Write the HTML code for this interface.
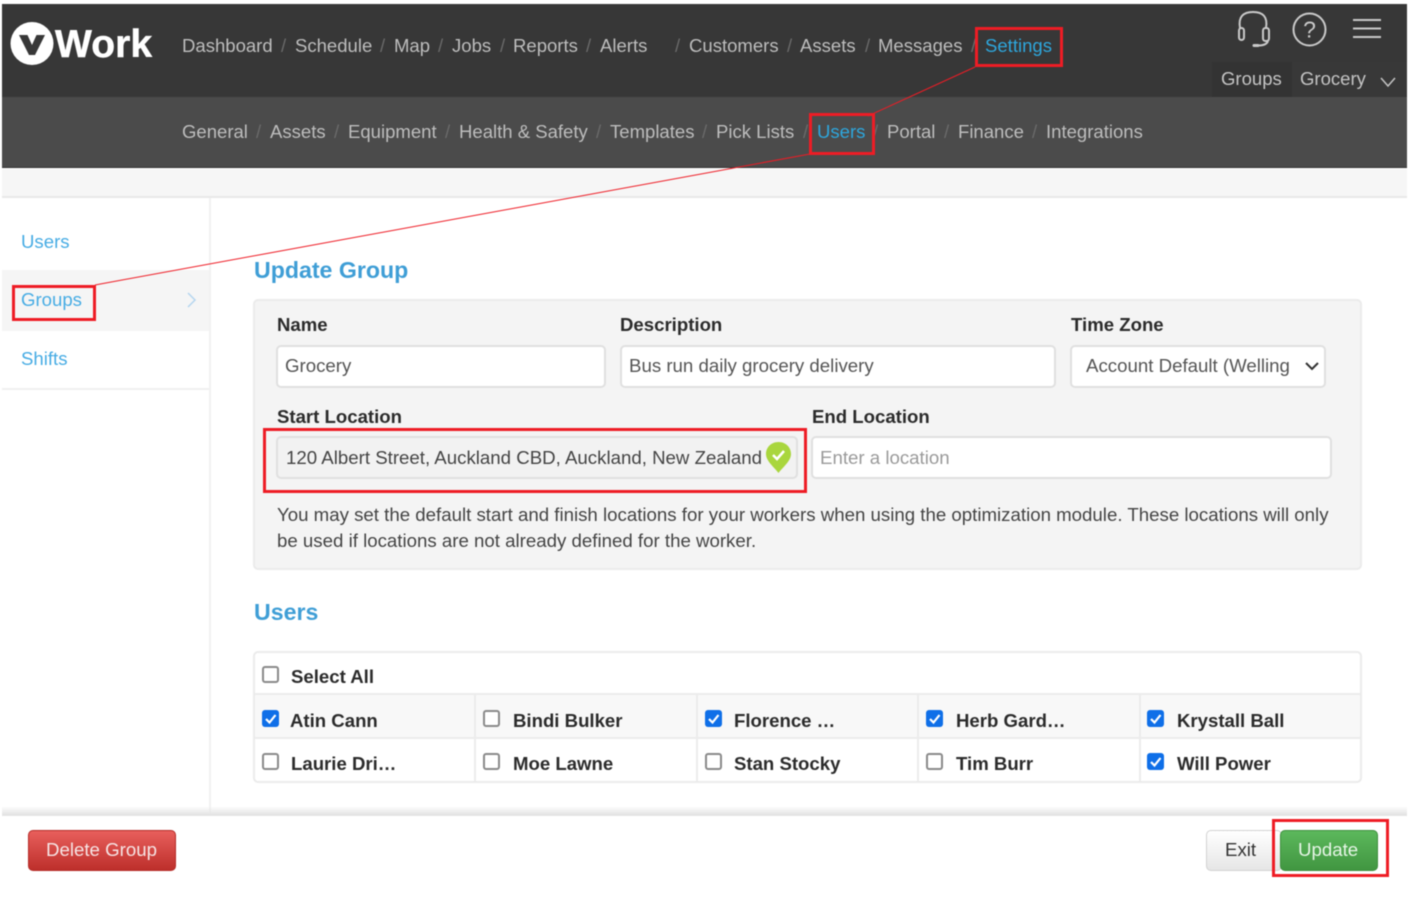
<!DOCTYPE html>
<html><head><meta charset="utf-8"><title>vWork - Update Group</title>
<style>
html,body{margin:0;padding:0;background:#fff}
#p{position:relative;width:1409px;height:903px;overflow:hidden;background:#fff;font-family:"Liberation Sans",sans-serif;font-size:18.67px;color:#3a3a3a;filter:blur(.45px)}
.b{position:absolute;box-sizing:border-box}
.t{position:absolute;line-height:24px;white-space:nowrap}
.n{color:#bdbdbd;font-size:18.55px}
.s{color:#6a6a6a;font-size:18.55px}
.a{color:#2ea6dc;font-size:18.55px}
.l{color:#47ace4;font-size:18.6px}
.h{color:#3f9ed6;font-weight:bold;font-size:23.15px;line-height:28px}
.f{font-weight:bold;color:#2b2b2b;font-size:18.6px}
.i{position:absolute;box-sizing:border-box;background:#fff;border:2px solid #e0e0e0;border-radius:5px;height:43px}
.r{position:absolute;box-sizing:border-box;border:3px solid #ee1c25}
.c{position:absolute;box-sizing:border-box;width:17px;height:17px;border:2px solid #8a8a8a;border-radius:3px;background:#fff}
.k{position:absolute;width:17px;height:17px;border-radius:3px;background:#0f6fe8}
.k svg{display:block}
.v{position:absolute;width:2px;background:#ececec}
.g{position:absolute;height:2px;background:#ececec}
</style></head><body><div id="p">
<div class="b" style="left:2px;top:4px;width:1405px;height:93px;background:#373737"></div>
<div class="b" style="left:2px;top:97px;width:1405px;height:71px;background:#4b4b4b;border-bottom:1px solid #333"></div>
<div class="b" style="left:2px;top:169px;width:1405px;height:29px;background:#f6f6f6;border-bottom:2px solid #e8e8e8"></div>
<div class="b" style="left:209px;top:198px;width:2px;height:617px;background:#f2f2f2"></div>
<div class="b" style="left:2px;top:270px;width:207px;height:61px;background:#f5f5f5"></div>
<div class="b" style="left:2px;top:388px;width:207px;height:2px;background:#f0f0f0"></div>

<svg class="b" style="left:8px;top:20px" width="48" height="48" viewBox="0 0 48 48"><circle cx="24" cy="23.500" r="21.500" fill="#fff"/><path d="M11 15h8.500l4.500 10 4.500-10H37L27 35h-6z" fill="#373737"/></svg>
<div class="t" style="left:55px;top:23px;font-size:39px;line-height:44px;font-weight:bold;color:#fff;letter-spacing:.1px;-webkit-text-stroke:.5px #fff">Work</div>

<div class="t n" style="left:182px;top:34px">Dashboard</div><div class="t s" style="left:281px;top:34px">/</div>
<div class="t n" style="left:295px;top:34px">Schedule</div><div class="t s" style="left:380px;top:34px">/</div>
<div class="t n" style="left:394px;top:34px">Map</div><div class="t s" style="left:438px;top:34px">/</div>
<div class="t n" style="left:452px;top:34px">Jobs</div><div class="t s" style="left:500px;top:34px">/</div>
<div class="t n" style="left:513px;top:34px">Reports</div><div class="t s" style="left:586px;top:34px">/</div>
<div class="t n" style="left:600px;top:34px">Alerts</div><div class="t s" style="left:675px;top:34px">/</div>
<div class="t n" style="left:689px;top:34px">Customers</div><div class="t s" style="left:787px;top:34px">/</div>
<div class="t n" style="left:800px;top:34px">Assets</div><div class="t s" style="left:865px;top:34px">/</div>
<div class="t n" style="left:878px;top:34px">Messages</div><div class="t s" style="left:971px;top:34px">/</div>
<div class="t a" style="left:985px;top:34px">Settings</div>

<div class="t n" style="left:182px;top:120px">General</div><div class="t s" style="left:256px;top:120px">/</div>
<div class="t n" style="left:270px;top:120px">Assets</div><div class="t s" style="left:334px;top:120px">/</div>
<div class="t n" style="left:348px;top:120px">Equipment</div><div class="t s" style="left:445px;top:120px">/</div>
<div class="t n" style="left:459px;top:120px">Health &amp; Safety</div><div class="t s" style="left:596px;top:120px">/</div>
<div class="t n" style="left:610px;top:120px">Templates</div><div class="t s" style="left:702px;top:120px">/</div>
<div class="t n" style="left:716px;top:120px">Pick Lists</div><div class="t s" style="left:803px;top:120px">/</div>
<div class="t a" style="left:817px;top:120px">Users</div><div class="t s" style="left:873px;top:120px">/</div>
<div class="t n" style="left:887px;top:120px">Portal</div><div class="t s" style="left:944px;top:120px">/</div>
<div class="t n" style="left:958px;top:120px">Finance</div><div class="t s" style="left:1032px;top:120px">/</div>
<div class="t n" style="left:1046px;top:120px">Integrations</div>

<svg class="b" style="left:1235px;top:8px" width="150" height="42" viewBox="0 0 150 42" fill="none" stroke="#c9c9c9" stroke-width="2">
<path d="M5 20C3 9 8 4 18 4s15 5 13 16"/><rect x="4" y="20" width="5" height="12" rx="2.500"/><rect x="28" y="20" width="6" height="13" rx="2.500"/><path d="M33 33c-1 3-5 4.500-10 4.500"/><path d="M19 37.500h4" stroke-width="3" stroke-linecap="round"/>
<circle cx="74.500" cy="21.500" r="16"/><text x="74.500" y="29.500" text-anchor="middle" font-family="Liberation Sans" font-size="23" fill="#c9c9c9" stroke="none">?</text>
<path d="M118 12h28M118 20.500h28M118 29h28"/>
</svg>
<div class="b" style="left:1212px;top:62px;width:195px;height:35px;background:#333"></div>
<div class="b" style="left:1292px;top:62px;width:115px;height:35px;background:#383838"></div>
<div class="t" style="left:1221px;top:67px;color:#c4c4c4;font-size:18.55px">Groups</div>
<div class="t" style="left:1300px;top:67px;color:#c4c4c4;font-size:18.55px">Grocery</div>
<svg class="b" style="left:1379px;top:76px" width="18" height="12" fill="none" stroke="#c4c4c4" stroke-width="1.500"><path d="M2 2l7 8 7-8"/></svg>

<div class="t l" style="left:21px;top:230px">Users</div>
<div class="t l" style="left:21px;top:288px">Groups</div>
<div class="t l" style="left:21px;top:347px">Shifts</div>
<svg class="b" style="left:186px;top:291px" width="12" height="18" fill="none" stroke="#b5d6ef" stroke-width="1.500"><path d="M2 2l7 7-7 7"/></svg>

<div class="t h" style="left:254px;top:256px">Update Group</div>
<div class="b" style="left:253px;top:299px;width:1109px;height:271px;background:#f4f4f4;border:2px solid #ebebeb;border-radius:5px"></div>
<div class="t f" style="left:277px;top:313px">Name</div>
<div class="t f" style="left:620px;top:313px">Description</div>
<div class="t f" style="left:1071px;top:313px">Time Zone</div>
<div class="i" style="left:276px;top:345px;width:330px"></div>
<div class="t" style="left:285px;top:354px;color:#555">Grocery</div>
<div class="i" style="left:620px;top:345px;width:436px"></div>
<div class="t" style="left:629px;top:354px;color:#555">Bus run daily grocery delivery</div>
<div class="i" style="left:1070px;top:345px;width:256px"></div>
<div class="t" style="left:1086px;top:354px;color:#555">Account Default (Welling</div>
<svg class="b" style="left:1304px;top:360px" width="16" height="12" fill="none" stroke="#333" stroke-width="2"><path d="M2 3l6 6 6-6"/></svg>

<div class="t f" style="left:277px;top:405px">Start Location</div>
<div class="t f" style="left:812px;top:405px">End Location</div>
<div class="i" style="left:276px;top:436px;width:522px;background:#f2f2f2"></div>
<div class="t" style="left:286px;top:446px;color:#444">120 Albert Street, Auckland CBD, Auckland, New Zealand</div>
<svg class="b" style="left:765px;top:441px" width="27" height="33" viewBox="0 0 27 33"><path d="M13.500 1C6 1 1 6.500 1 13c0 7 8 13 12.500 19C18 26 26 20 26 13 26 6.500 21 1 13.500 1z" fill="#a9d63d"/><path d="M8 14l4 4 7-8" fill="none" stroke="#fff" stroke-width="2.500"/></svg>
<div class="i" style="left:811px;top:436px;width:521px"></div>
<div class="t" style="left:820px;top:446px;color:#9a9a9a">Enter a location</div>
<div class="t" style="left:277px;top:503px;color:#444">You may set the default start and finish locations for your workers when using the optimization module. These locations will only</div>
<div class="t" style="left:277px;top:529px;color:#444">be used if locations are not already defined for the worker.</div>

<div class="t h" style="left:254px;top:598px">Users</div>
<div class="b" style="left:253px;top:651px;width:1109px;height:132px;border:2px solid #ebebeb;border-radius:5px;background:#fff"></div>
<div class="b" style="left:255px;top:695px;width:1105px;height:43px;background:#f8f8f8"></div>
<div class="g" style="left:255px;top:693px;width:1105px"></div>
<div class="g" style="left:255px;top:737px;width:1105px"></div>
<div class="v" style="left:474px;top:695px;height:86px"></div>
<div class="v" style="left:696px;top:695px;height:86px"></div>
<div class="v" style="left:917px;top:695px;height:86px"></div>
<div class="v" style="left:1139px;top:695px;height:86px"></div>

<div class="c" style="left:262px;top:666px"></div>
<div class="t f" style="left:291px;top:665px">Select All</div>

<div class="k" style="left:262px;top:710px"><svg width="17" height="17" fill="none" stroke="#fff" stroke-width="2.200"><path d="M4 9l3.500 3.500L13.500 5"/></svg></div>
<div class="t f" style="left:290px;top:709px">Atin Cann</div>
<div class="c" style="left:483px;top:710px"></div>
<div class="t f" style="left:513px;top:709px">Bindi Bulker</div>
<div class="k" style="left:705px;top:710px"><svg width="17" height="17" fill="none" stroke="#fff" stroke-width="2.200"><path d="M4 9l3.500 3.500L13.500 5"/></svg></div>
<div class="t f" style="left:734px;top:709px">Florence …</div>
<div class="k" style="left:926px;top:710px"><svg width="17" height="17" fill="none" stroke="#fff" stroke-width="2.200"><path d="M4 9l3.500 3.500L13.500 5"/></svg></div>
<div class="t f" style="left:956px;top:709px">Herb Gard…</div>
<div class="k" style="left:1147px;top:710px"><svg width="17" height="17" fill="none" stroke="#fff" stroke-width="2.200"><path d="M4 9l3.500 3.500L13.500 5"/></svg></div>
<div class="t f" style="left:1177px;top:709px">Krystall Ball</div>

<div class="c" style="left:262px;top:753px"></div>
<div class="t f" style="left:291px;top:752px">Laurie Dri…</div>
<div class="c" style="left:483px;top:753px"></div>
<div class="t f" style="left:513px;top:752px">Moe Lawne</div>
<div class="c" style="left:705px;top:753px"></div>
<div class="t f" style="left:734px;top:752px">Stan Stocky</div>
<div class="c" style="left:926px;top:753px"></div>
<div class="t f" style="left:956px;top:752px">Tim Burr</div>
<div class="k" style="left:1147px;top:753px"><svg width="17" height="17" fill="none" stroke="#fff" stroke-width="2.200"><path d="M4 9l3.500 3.500L13.500 5"/></svg></div>
<div class="t f" style="left:1177px;top:752px">Will Power</div>

<div class="b" style="left:2px;top:806px;width:1405px;height:10px;background:linear-gradient(rgba(230,230,230,0),#e6e6e6);border-bottom:2px solid #e4e4e4"></div>
<div class="b" style="left:28px;top:830px;width:148px;height:41px;border-radius:5px;background:linear-gradient(#e85f5c,#bd2f2b);border:1px solid #b52b27"></div>
<div class="t" style="left:46px;top:838px;color:#f6e4e4">Delete Group</div>
<div class="b" style="left:1206px;top:830px;width:76px;height:41px;border-radius:5px;background:linear-gradient(#fff,#e6e6e6);border:1px solid #d2d2d2"></div>
<div class="t" style="left:1225px;top:838px;color:#333">Exit</div>
<div class="b" style="left:1280px;top:830px;width:98px;height:41px;border-radius:5px;background:linear-gradient(#5cb85c,#419641);border:1px solid #3e8f3e"></div>
<div class="t" style="left:1298px;top:838px;color:#e6f5e6">Update</div>

<svg class="b" style="left:0;top:0" width="1409" height="903" fill="none" stroke="#ee1c25" stroke-width="1"><path d="M975 67L868 116M810 154L95 285"/></svg>
<div class="r" style="left:975px;top:27px;width:88px;height:40px"></div>
<div class="r" style="left:809px;top:113px;width:66px;height:42px"></div>
<div class="r" style="left:12px;top:285px;width:84px;height:36px"></div>
<div class="r" style="left:263px;top:428px;width:544px;height:65px"></div>
<div class="r" style="left:1272px;top:819px;width:117px;height:58px"></div>
</div></body></html>
